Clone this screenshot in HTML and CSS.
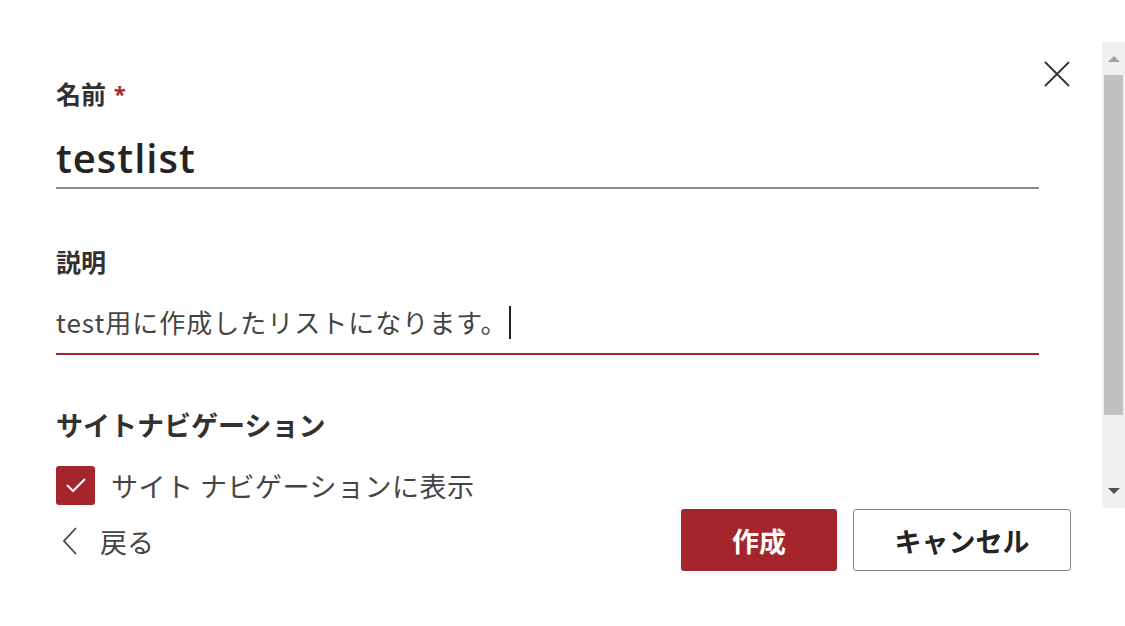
FILE: index.html
```html
<!DOCTYPE html>
<html lang="ja">
<head>
<meta charset="utf-8">
<link rel="stylesheet" href="styles.css">
</head>
<body>
<div class="page">
  <div class="panel">
    <div class="form">
      <div class="field">
        <div class="label">名前 <span class="req">*</span></div>
        <div class="input name-input">testlist</div>
      </div>
      <div class="field desc-field">
        <div class="label">説明</div>
        <div class="input desc-input">test用に作成したリストになります。<span class="caret"></span></div>
      </div>
      <div class="section-title">サイトナビゲーション</div>
      <div class="check-row">
        <span class="checkbox"><svg width="22" height="18" viewBox="0 0 22 18"><path d="M2 9 L8 15 L20 3" fill="none" stroke="#fff" stroke-width="2"/></svg></span>
        <span class="check-label">サイト ナビゲーションに表示</span>
      </div>
      <div class="footer">
        <div class="back">
          <svg width="18" height="30" viewBox="0 0 18 30"><path d="M16 2 L4 15 L16 28" fill="none" stroke="#444" stroke-width="1.8"/></svg>
          <span>戻る</span>
        </div>
        <div class="buttons">
          <button class="btn primary">作成</button>
          <button class="btn secondary">キャンセル</button>
        </div>
      </div>
    </div>
    <div class="close">
      <svg width="26" height="26" viewBox="0 0 26 26"><path d="M1 1 L25 25 M25 1 L1 25" stroke="#333" stroke-width="1.8" fill="none"/></svg>
    </div>
  </div>
  <div class="scrollbar">
    <div class="arrow up"></div>
    <div class="thumb"></div>
    <div class="track"></div>
    <div class="arrow down"></div>
  </div>
</div>
</body>
</html>
```

FILE: styles.css
```css
html, body {
  margin: 0;
  padding: 0;
  background: #fff;
}
body {
  font-family: "Open Sans", "Noto Sans CJK JP", sans-serif;
  color: #323130;
}
.page {
  width: 1125px;
  height: 626px;
  display: flex;
  position: relative;
}
.panel {
  flex: 1;
  display: flex;
  position: relative;
}
.form {
  width: 983px;
  margin-left: 56px;
  padding-top: 76px;
  display: flex;
  flex-direction: column;
}
.label {
  font-size: 25px;
  font-weight: 700;
  line-height: 34px;
  height: 34px;
  font-family: "Noto Sans CJK JP", sans-serif;
  color: #323130;
}
.req {
  color: #a4262c;
  font-family: "Open Sans", sans-serif;
  font-size: 22px;
  vertical-align: top;
  margin-left: 2px;
}
.input {
  border-bottom: 2px solid #8a8886;
}
.name-input {
  font-size: 40px;
  line-height: 59px;
  height: 59px;
  padding-top: 18px;
  letter-spacing: 1px;
  color: #252423;
  font-weight: 600;
}
.desc-field {
  margin-top: 55px;
}
.desc-input {
  border-bottom-color: #a4262c;
  font-size: 26px;
  letter-spacing: 1px;
  line-height: 40px;
  height: 40px;
  padding-top: 24px;
  padding-bottom: 11px;
  font-family: "Noto Sans CJK JP", sans-serif;
  color: #444;
  display: flex;
  align-items: center;
}
.caret {
  display: inline-block;
  width: 2px;
  height: 33px;
  background: #222;
  margin-left: 1px;
}
.section-title {
  margin-top: 45px;
  font-size: 27px;
  font-weight: 700;
  line-height: 50px;
  height: 50px;
  font-family: "Noto Sans CJK JP", sans-serif;
  color: #323130;
}
.check-row {
  margin-top: 15px;
  display: flex;
  align-items: center;
  gap: 16px;
  height: 40px;
}
.checkbox {
  width: 39px;
  height: 39px;
  border-radius: 3px;
  background: #a4262c;
  display: flex;
  align-items: center;
  justify-content: center;
}
.check-label {
  font-size: 27px;
  letter-spacing: 0.5px;
  font-family: "Noto Sans CJK JP", sans-serif;
  color: #444;
}
.footer {
  display: flex;
  justify-content: space-between;
  margin-top: 4px;
  margin-right: -32px;
}
.back {
  display: flex;
  align-items: center;
  gap: 22px;
  padding-left: 4px;
  height: 64px;
  font-size: 27px;
  font-family: "Noto Sans CJK JP", sans-serif;
  color: #444;
}
.buttons {
  display: flex;
  gap: 16px;
}
.btn {
  height: 62px;
  border-radius: 3px;
  font-family: "Noto Sans CJK JP", sans-serif;
  font-size: 27px;
  font-weight: 700;
  padding: 0;
}
.primary {
  width: 156px;
  background: #a4262c;
  border: none;
  color: #fff;
}
.secondary {
  width: 218px;
  background: #fff;
  border: 1.5px solid #8a8886;
  color: #252423;
}
.close {
  position: absolute;
  left: 1044px;
  top: 61px;
}
.scrollbar {
  position: absolute;
  left: 1102px;
  top: 42px;
  width: 23px;
  height: 466px;
  background: #f0f0f0;
  display: flex;
  flex-direction: column;
  align-items: center;
}
.arrow {
  width: 0;
  height: 0;
  border-left: 6px solid transparent;
  border-right: 6px solid transparent;
}
.arrow.up {
  margin-top: 14px;
  border-bottom: 6px solid #a3a3a3;
}
.thumb {
  margin-top: 13px;
  width: 19px;
  height: 340px;
  background: #c1c1c1;
}
.track {
  flex: 1;
}
.arrow.down {
  margin-bottom: 14px;
  border-top: 6px solid #505050;
}
```
